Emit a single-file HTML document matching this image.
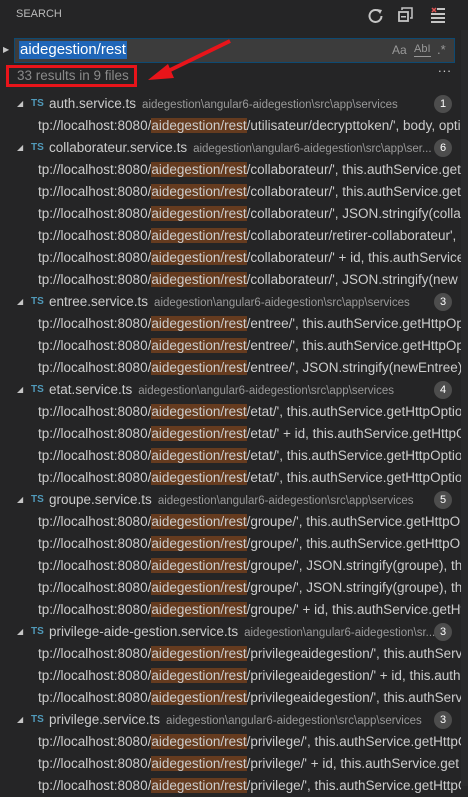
<!DOCTYPE html>
<html><head><meta charset="utf-8"><style>
*{margin:0;padding:0;box-sizing:border-box}
body{width:468px;height:786px;background:#252526;overflow:hidden;position:relative;font-family:"Liberation Sans",sans-serif;color:#cccccc}
.r{position:absolute;left:0;width:461px;height:22px;line-height:22px;font-size:13px;white-space:nowrap;overflow:hidden}
.l{padding-left:38px;font-size:13.5px}
.h{background:#653b1f}
.hd .tri{position:absolute;left:17px;top:0;font-size:8px;color:#c5c5c5}
.hd .ts{position:absolute;left:31px;top:0;font-size:10px;font-weight:bold;color:#519aba}
.hd .fn{position:absolute;left:49px;top:0;font-size:13.5px}
.hd .p{font-size:11.5px;color:#9a9a9a;margin-left:6px}
.b{position:absolute;left:434px;top:2px;width:18px;height:18px;border-radius:9px;background:#4d4d4d;color:#fff;font-size:11px;line-height:18px;text-align:center}
.sb{position:absolute;right:0;top:30px;width:7px;height:756px;background:#2a2a2b}
</style></head><body>
<div style="position:absolute;left:16px;top:8px;font-size:11px;color:#bbbbbb">SEARCH</div>
<svg style="position:absolute;left:366px;top:6px" width="20" height="20" viewBox="0 0 20 20"><path d="M14 6 A6 6 0 1 0 15.5 10" fill="none" stroke="#c5c5c5" stroke-width="2"/><path d="M11 3 L16 4 L14 8Z" fill="#c5c5c5"/></svg>
<svg style="position:absolute;left:398px;top:6px" width="16" height="18" viewBox="0 0 16 18"><rect x="1" y="6" width="9" height="9" fill="none" stroke="#c5c5c5" stroke-width="1.8"/><path d="M4 4V2H14V12H12" fill="none" stroke="#c5c5c5" stroke-width="1.5"/><rect x="3" y="10" width="5" height="1.5" fill="#c5c5c5"/></svg>
<svg style="position:absolute;left:430px;top:6px" width="16" height="18" viewBox="0 0 16 18"><path d="M2 2L6 6M6 2L2 6" stroke="#e05555" stroke-width="1.5"/><rect x="7" y="2" width="8" height="2" fill="#c5c5c5"/><rect x="1" y="7" width="14" height="2" fill="#c5c5c5"/><rect x="1" y="11" width="14" height="2" fill="#c5c5c5"/><rect x="1" y="15" width="14" height="2" fill="#c5c5c5"/></svg>
<div class="sb"></div>
<div style="position:absolute;left:3px;top:45px;font-size:8px;color:#c5c5c5">▶</div>
<div style="position:absolute;left:14px;top:38px;width:441px;height:25px;background:#3c3c3c;border:1px solid #0e4a72"></div>
<div style="position:absolute;left:19px;top:41px;height:18px;line-height:18px;font-size:15px;background:#1f66b8;color:#fff;padding:0 1px">aidegestion/rest</div>
<div style="position:absolute;left:392px;top:43px;font-size:12px;color:#999">Aa</div>
<div style="position:absolute;left:414px;top:43px;font-size:11px;color:#999;border-bottom:1px solid #999;line-height:13px">AbI</div>
<div style="position:absolute;left:437px;top:42px;font-size:13px;color:#999">.*</div>
<div style="position:absolute;left:438px;top:60px;font-size:13px;color:#ccc;letter-spacing:1px">...</div>
<div style="position:absolute;left:6px;top:65px;width:131px;height:22px;border:3px solid #e8141a"></div>
<div style="position:absolute;left:17px;top:68px;font-size:13.5px;color:#8a8a8a">33 results in 9 files</div>
<svg style="position:absolute;left:140px;top:36px" width="95" height="50"><path d="M90 5 L22 38" stroke="#e8141a" stroke-width="4"/><path d="M8 44 L28 28 L34 42Z" fill="#e8141a"/></svg>

<div class="r hd" style="top:93px"><span class="tri">◢</span><span class="ts">TS</span><span class="fn">auth.service.ts<span class="p">aidegestion\angular6-aidegestion\src\app\services</span></span><span class="b">1</span></div>
<div class="r l" style="top:115px">tp://localhost:8080/<span class="h">aidegestion/rest</span>/utilisateur/decrypttoken/', body, opti</div>
<div class="r hd" style="top:137px"><span class="tri">◢</span><span class="ts">TS</span><span class="fn">collaborateur.service.ts<span class="p">aidegestion\angular6-aidegestion\src\app\ser...</span></span><span class="b">6</span></div>
<div class="r l" style="top:159px">tp://localhost:8080/<span class="h">aidegestion/rest</span>/collaborateur/', this.authService.getH</div>
<div class="r l" style="top:181px">tp://localhost:8080/<span class="h">aidegestion/rest</span>/collaborateur/', this.authService.getH</div>
<div class="r l" style="top:203px">tp://localhost:8080/<span class="h">aidegestion/rest</span>/collaborateur/', JSON.stringify(collab</div>
<div class="r l" style="top:225px">tp://localhost:8080/<span class="h">aidegestion/rest</span>/collaborateur/retirer-collaborateur',</div>
<div class="r l" style="top:247px">tp://localhost:8080/<span class="h">aidegestion/rest</span>/collaborateur/' + id, this.authService</div>
<div class="r l" style="top:269px">tp://localhost:8080/<span class="h">aidegestion/rest</span>/collaborateur/', JSON.stringify(new</div>
<div class="r hd" style="top:291px"><span class="tri">◢</span><span class="ts">TS</span><span class="fn">entree.service.ts<span class="p">aidegestion\angular6-aidegestion\src\app\services</span></span><span class="b">3</span></div>
<div class="r l" style="top:313px">tp://localhost:8080/<span class="h">aidegestion/rest</span>/entree/', this.authService.getHttpOpti</div>
<div class="r l" style="top:335px">tp://localhost:8080/<span class="h">aidegestion/rest</span>/entree/', this.authService.getHttpOpti</div>
<div class="r l" style="top:357px">tp://localhost:8080/<span class="h">aidegestion/rest</span>/entree/', JSON.stringify(newEntree), t</div>
<div class="r hd" style="top:379px"><span class="tri">◢</span><span class="ts">TS</span><span class="fn">etat.service.ts<span class="p">aidegestion\angular6-aidegestion\src\app\services</span></span><span class="b">4</span></div>
<div class="r l" style="top:401px">tp://localhost:8080/<span class="h">aidegestion/rest</span>/etat/', this.authService.getHttpOption</div>
<div class="r l" style="top:423px">tp://localhost:8080/<span class="h">aidegestion/rest</span>/etat/' + id, this.authService.getHttpO</div>
<div class="r l" style="top:445px">tp://localhost:8080/<span class="h">aidegestion/rest</span>/etat/', this.authService.getHttpOption</div>
<div class="r l" style="top:467px">tp://localhost:8080/<span class="h">aidegestion/rest</span>/etat/', this.authService.getHttpOption</div>
<div class="r hd" style="top:489px"><span class="tri">◢</span><span class="ts">TS</span><span class="fn">groupe.service.ts<span class="p">aidegestion\angular6-aidegestion\src\app\services</span></span><span class="b">5</span></div>
<div class="r l" style="top:511px">tp://localhost:8080/<span class="h">aidegestion/rest</span>/groupe/', this.authService.getHttpO...</div>
<div class="r l" style="top:533px">tp://localhost:8080/<span class="h">aidegestion/rest</span>/groupe/', this.authService.getHttpO...</div>
<div class="r l" style="top:555px">tp://localhost:8080/<span class="h">aidegestion/rest</span>/groupe/', JSON.stringify(groupe), this</div>
<div class="r l" style="top:577px">tp://localhost:8080/<span class="h">aidegestion/rest</span>/groupe/', JSON.stringify(groupe), this</div>
<div class="r l" style="top:599px">tp://localhost:8080/<span class="h">aidegestion/rest</span>/groupe/' + id, this.authService.getHtt</div>
<div class="r hd" style="top:621px"><span class="tri">◢</span><span class="ts">TS</span><span class="fn">privilege-aide-gestion.service.ts<span class="p">aidegestion\angular6-aidegestion\sr...</span></span><span class="b">3</span></div>
<div class="r l" style="top:643px">tp://localhost:8080/<span class="h">aidegestion/rest</span>/privilegeaidegestion/', this.authServi</div>
<div class="r l" style="top:665px">tp://localhost:8080/<span class="h">aidegestion/rest</span>/privilegeaidegestion/' + id, this.auth</div>
<div class="r l" style="top:687px">tp://localhost:8080/<span class="h">aidegestion/rest</span>/privilegeaidegestion/', this.authServi</div>
<div class="r hd" style="top:709px"><span class="tri">◢</span><span class="ts">TS</span><span class="fn">privilege.service.ts<span class="p">aidegestion\angular6-aidegestion\src\app\services</span></span><span class="b">3</span></div>
<div class="r l" style="top:731px">tp://localhost:8080/<span class="h">aidegestion/rest</span>/privilege/', this.authService.getHttpO</div>
<div class="r l" style="top:753px">tp://localhost:8080/<span class="h">aidegestion/rest</span>/privilege/' + id, this.authService.get</div>
<div class="r l" style="top:775px">tp://localhost:8080/<span class="h">aidegestion/rest</span>/privilege/', this.authService.getHttpO</div>
</body></html>
